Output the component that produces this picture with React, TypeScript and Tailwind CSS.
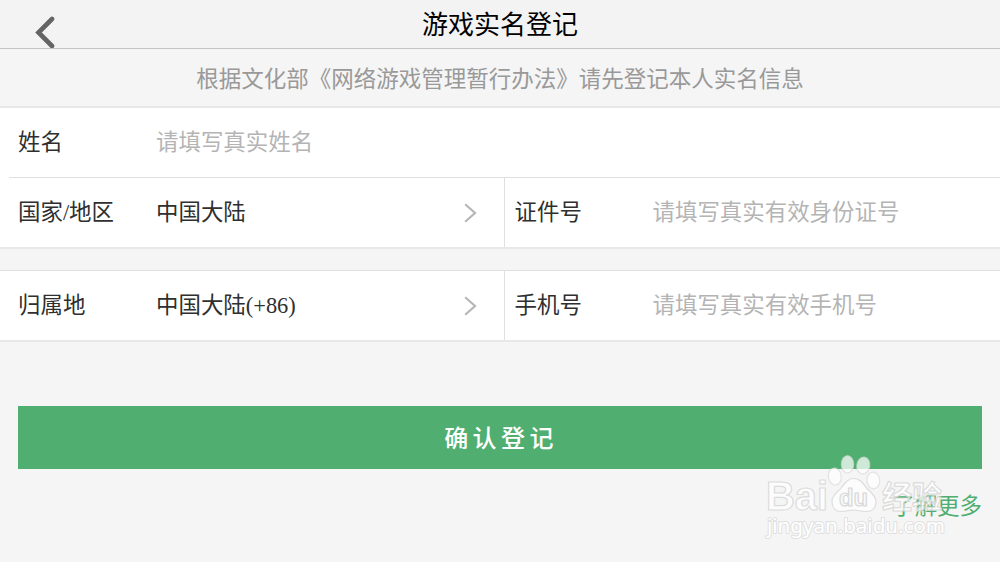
import type { ReactNode } from "react";

type FieldProps = {
  label: string;
  value?: string;
  placeholder?: string;
  className?: string;
  children?: ReactNode;
};

const Chevron = () => (
  <svg className="mb-0.5 ml-auto h-5 w-3.5" viewBox="0 0 14 20" fill="none">
    <path d="M1.200 1.200 L11 10 L1.200 18.800" stroke="#b6b6b6" strokeWidth="2.200" />
  </svg>
);

const Field = ({ label, value, placeholder, className = "", children }: FieldProps) => (
  <div className={`flex h-full items-center pt-0.5 ${className}`}>
    <span className="w-[138px] shrink-0 text-[#2f2f2f]">{label}</span>
    {value ? (
      <span className="text-[#2f2f2f]">{value}</span>
    ) : (
      <span className="text-[#b4b4b4]">{placeholder}</span>
    )}
    {children}
  </div>
);

const Watermark = () => (
  <svg
    className="pointer-events-none absolute top-[450px] left-[760px] h-[96px] w-[200px]"
    viewBox="760 450 200 96"
  >
    <g
      fill="#ffffff"
      fillOpacity="0.72"
      stroke="#d4d4d4"
      strokeOpacity="0.8"
      strokeWidth="1.2"
      strokeLinejoin="round"
      fontFamily="'Liberation Sans', 'Noto Sans CJK SC', sans-serif"
    >
      <g fontWeight="700">
        <text x="766" y="510" fontSize="40" textLength="62" lengthAdjust="spacingAndGlyphs">
          Bai
        </text>
        <text x="882" y="508" fontSize="31" textLength="60" lengthAdjust="spacingAndGlyphs">
          经验
        </text>
      </g>
      <g strokeOpacity="0.6">
        <ellipse cx="834.8" cy="476.5" rx="6.4" ry="8.6" transform="rotate(-8 834.8 476.5)" />
        <ellipse cx="847.5" cy="464.3" rx="6.2" ry="8.7" />
        <ellipse cx="863.3" cy="465.5" rx="6.5" ry="8.5" transform="rotate(10 863.3 465.5)" />
        <ellipse cx="873.3" cy="480.5" rx="6.4" ry="8.3" transform="rotate(-6 873.3 480.5)" />
      </g>
      <path d="M853.5 478.5 C860 478.5 863 483 866.5 488 C870 492 876 495 876 502 C876 508 872 511.5 866 511.5 C861 511.5 858 510 853.5 510 C849 510 846 511.5 841 511.5 C835 511.5 832 507 832 501 C832 495 838 492 841.5 487.5 C845 483 848 478.5 853.5 478.5 Z" />
      <text
        x="839"
        y="505.5"
        fontSize="24"
        fontWeight="700"
        textLength="29"
        lengthAdjust="spacingAndGlyphs"
        fill="#f7f7f7"
        stroke="#cfcfcf"
      >
        du
      </text>
      <text
        x="767"
        y="533"
        fontSize="20"
        fontFamily="'Noto Sans', sans-serif"
        textLength="178"
        lengthAdjust="spacingAndGlyphs"
        strokeWidth="2"
        strokeOpacity="0.65"
        fillOpacity="1"
        paintOrder="stroke"
      >
        jingyan.baidu.com
      </text>
    </g>
  </svg>
);

const App = () => (
  <div className="relative h-[562px] w-[1000px] overflow-hidden bg-[#f5f5f5] font-['Liberation_Serif','Noto_Sans_CJK_SC',sans-serif] text-[22.45px] leading-none">
    <header className="grid h-[49px] grid-cols-[1fr_auto_1fr] items-center border-b border-[#c4c4c4] bg-[#f3f3f3]">
      <svg className="mt-4 ml-[35px] h-8 w-5" viewBox="0 0 20 32" fill="none">
        <path d="M17 3 L3.500 16.500 L17 30" stroke="#646464" strokeWidth="4.600" strokeLinecap="round" />
      </svg>
      <h1 className="pt-1 text-[26px] leading-none text-black">游戏实名登记</h1>
    </header>

    <p className="flex h-[57px] items-center justify-center pt-1.5 text-[22.5px] leading-none text-[#999999]">
      根据文化部《网络游戏管理暂行办法》请先登记本人实名信息
    </p>

    <section className="border-y-2 border-[#e8e8e8] bg-white">
      <div className="h-[69px]">
        <Field label="姓名" placeholder="请填写真实姓名" className="pl-[18px]" />
      </div>
      <div className="ml-[9px] border-t border-[#e0e0e0]" />
      <div className="grid h-[69px] grid-cols-[504px_1fr]">
        <Field label="国家/地区" value="中国大陆" className="pr-[26px] pl-[18px]">
          <Chevron />
        </Field>
        <Field label="证件号" placeholder="请填写真实有效身份证号" className="border-l border-[#e0e0e0] pl-[9.5px]" />
      </div>
    </section>

    <section className="mt-[21px] border-t border-b-2 border-t-[#e0e0e0] border-b-[#e8e8e8] bg-white">
      <div className="grid h-[69px] grid-cols-[504px_1fr]">
        <Field label="归属地" value="中国大陆(+86)" className="pr-[26px] pl-[18px]">
          <Chevron />
        </Field>
        <Field label="手机号" placeholder="请填写真实有效手机号" className="border-l border-[#e0e0e0] pl-[9.5px]" />
      </div>
    </section>

    <div className="px-[18px] pt-16">
      <button className="flex h-[63px] w-full items-center justify-center bg-[#50af70] pt-0.5 pl-0.5 text-2xl leading-none font-medium tracking-[4.4px] text-white">
        确认登记
      </button>
      <div className="mt-[27px] flex justify-end">
        <a className="text-[#50af70]">了解更多</a>
      </div>
    </div>

    <Watermark />
  </div>
);

export default App;
